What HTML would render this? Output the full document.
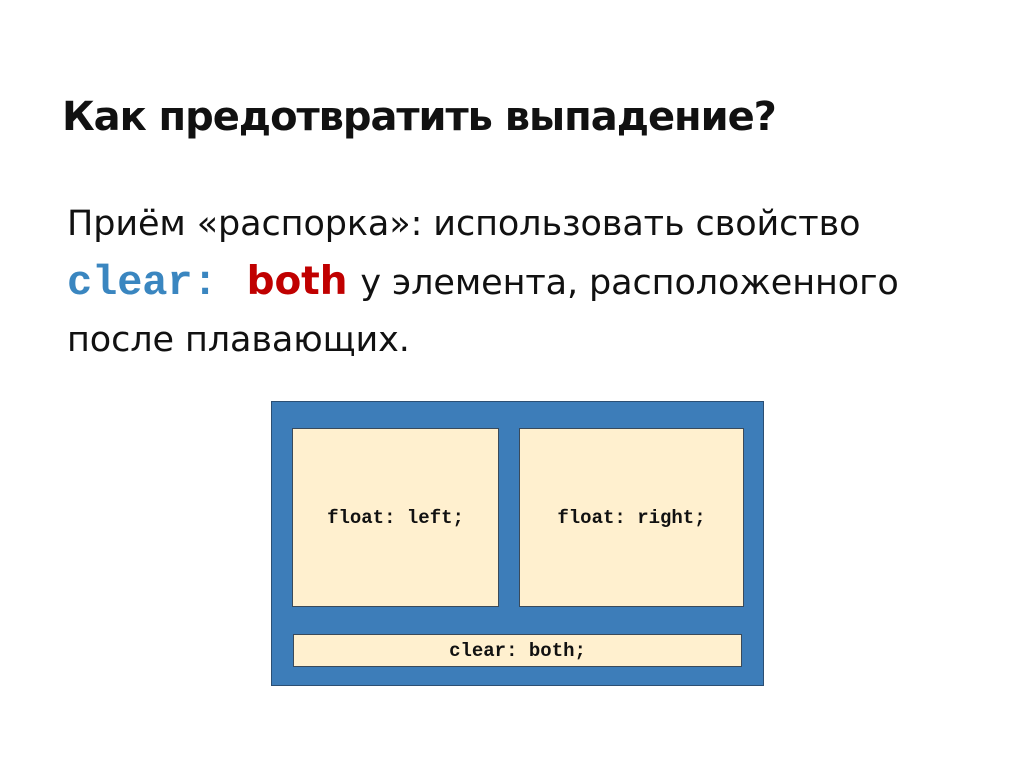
<!DOCTYPE html>
<html><head><meta charset="utf-8"><style>
html,body{margin:0;padding:0;background:#fff;width:1024px;height:768px;overflow:hidden;position:relative}
.t{position:absolute;white-space:nowrap;color:#111;font-family:"DejaVu Sans","Liberation Sans",sans-serif}
.h{left:62px;top:94px;font-size:40px;font-weight:bold;letter-spacing:-1.05px}
.b{left:67px;font-size:35px;letter-spacing:-0.1px}
.mono{font-family:"Liberation Mono",monospace;font-weight:bold;color:#3a86c0;font-size:42px}
.red{color:#c00000;font-weight:bold;font-size:39px;margin-left:18px;margin-right:2px}
.box{position:absolute;background:#fff0cf;border:1.5px solid #3a4a5a;box-sizing:border-box;font-family:"Liberation Mono",monospace;font-weight:bold;font-size:19px;color:#111;display:flex;align-items:center;justify-content:center}
</style></head><body>
<div class="t h">Как предотвратить выпадение?</div>
<div class="t b" style="top:204px">Приём «распорка»: использовать свойство</div>
<div class="t b" style="top:259px"><span class="mono">clear:</span> <span class="red">both</span> у элемента, расположенного</div>
<div class="t b" style="top:320px">после плавающих.</div>
<div style="position:absolute;left:271px;top:401px;width:493px;height:285px;background:#3d7db9;border:1px solid #2c4f73;box-sizing:border-box"></div>
<div class="box" style="left:292px;top:428px;width:207px;height:179px">float: left;</div>
<div class="box" style="left:519px;top:428px;width:225px;height:179px">float: right;</div>
<div class="box" style="left:293px;top:634px;width:449px;height:33px">clear: both;</div>
</body></html>
